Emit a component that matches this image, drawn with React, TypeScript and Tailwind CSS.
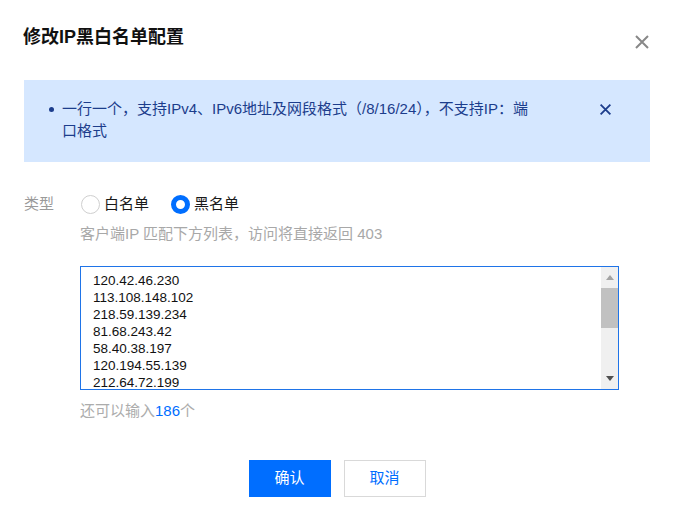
import React from 'react';

const ips = [
  '120.42.46.230',
  '113.108.148.102',
  '218.59.139.234',
  '81.68.243.42',
  '58.40.38.197',
  '120.194.55.139',
  '212.64.72.199',
  '101.32.14.88',
  '49.234.66.17',
  '175.24.130.5',
  '42.193.12.250',
  '129.211.8.61',
  '59.37.125.40',
  '183.3.226.91',
  '14.215.177.38',
];

function CloseIcon({ className, size, stroke }: { className?: string; size: number; stroke: number }) {
  return (
    <svg width={size} height={size} viewBox="0 0 16 16" className={className} aria-hidden>
      <path d="M2 2 L14 14 M14 2 L2 14" stroke="currentColor" strokeWidth={stroke} fill="none" />
    </svg>
  );
}

function Radio({ checked, label }: { checked?: boolean; label: string }) {
  return (
    <label className="flex items-center cursor-pointer">
      {checked ? (
        <span className="w-[19px] h-[19px] rounded-full border-[5px] border-[#006eff] bg-white" />
      ) : (
        <span className="w-[19px] h-[19px] rounded-full border border-[#cfcfcf] bg-white" />
      )}
      <span className="ml-[4px] text-[15px] leading-[22px] text-[#1a1a1a]">{label}</span>
    </label>
  );
}

function FakeScrollbar() {
  return (
    <div className="w-[17px] bg-[#f0f0f0] flex flex-col">
      <div className="h-[21px] flex items-center justify-center">
        <svg width="8" height="5" viewBox="0 0 8 5">
          <path d="M0 5 L4 0 L8 5 Z" fill="#a3a3a3" />
        </svg>
      </div>
      <div className="h-[40px] bg-[#c1c1c1]" />
      <div className="flex-1" />
      <div className="h-[21px] flex items-center justify-center">
        <svg width="8" height="5" viewBox="0 0 8 5">
          <path d="M0 0 L8 0 L4 5 Z" fill="#505050" />
        </svg>
      </div>
    </div>
  );
}

export default function App() {
  return (
    <div
      className="w-[677px] h-[520px] bg-white pl-[24px] pr-[27px] overflow-hidden"
      style={{ fontFamily: '"Liberation Sans", "Noto Sans CJK SC", sans-serif' }}
    >
      {/* header */}
      <div className="mt-[23px] h-[28px] flex items-center justify-between">
        <h2 className="-ml-px text-[18px] leading-[28px] font-bold text-[#111]">修改IP黑白名单配置</h2>
        <button className="w-[16px] h-[16px] flex items-center justify-center text-[#888] mt-[9px]">
          <CloseIcon size={16} stroke={2} />
        </button>
      </div>

      {/* notice */}
      <div className="mt-[29px] h-[82px] bg-[#d5e7ff] flex items-start pt-[18px] pl-[25px] pr-[38px]">
        <div className="flex w-[520px]">
          <span className="w-[13px] h-[22px] flex items-center shrink-0">
            <span className="w-[5px] h-[5px] rounded-full bg-[#1c3d8c]" />
          </span>
          <p className="w-[472px] text-[15px] leading-[22px] text-[#1c3d8c] break-all">
            一行一个，支持IPv4、IPv6地址及网段格式（/8/16/24），不支持IP：端口格式
          </p>
        </div>
        <button className="ml-auto h-[22px] flex items-center text-[#1c3d8c]">
          <CloseIcon size={13} stroke={2.2} />
        </button>
      </div>

      {/* type */}
      <div className="mt-[31px] flex items-center h-[22px]">
        <span className="w-[57px] text-[15px] leading-[22px] text-[#9a9a9a]">类型</span>
        <div className="flex items-center gap-[22px]">
          <Radio label="白名单" />
          <Radio checked label="黑名单" />
        </div>
      </div>
      <p className="mt-[8px] ml-[56px] text-[15px] leading-[22px] text-[#a8a8a8]">
        客户端IP 匹配下方列表，访问将直接返回 403
      </p>

      {/* list */}
      <div className="mt-[21px] ml-[56px] w-[539px] h-[124px] border border-[#1f74e8] flex">
        <textarea
          readOnly
          defaultValue={ips.join('\n')}
          className="flex-1 resize-none overflow-hidden outline-none pl-[12px] pt-[5px] text-[13.5px] leading-[17px] text-[#111]"
          style={{ fontFamily: '"Liberation Sans", Arial, sans-serif' }}
        />
        <FakeScrollbar />
      </div>
      <p className="mt-[10px] ml-[56px] text-[15px] leading-[22px] text-[#acacac]">
        还可以输入<span className="text-[#006eff]">186</span>个
      </p>

      {/* actions */}
      <div className="mt-[38px] flex justify-center gap-[13px]">
        <button className="w-[82px] h-[37px] bg-[#006eff] text-white text-[15px]">确认</button>
        <button className="w-[82px] h-[37px] bg-white border border-[#d9d9d9] text-[#006eff] text-[15px]">
          取消
        </button>
      </div>
    </div>
  );
}
